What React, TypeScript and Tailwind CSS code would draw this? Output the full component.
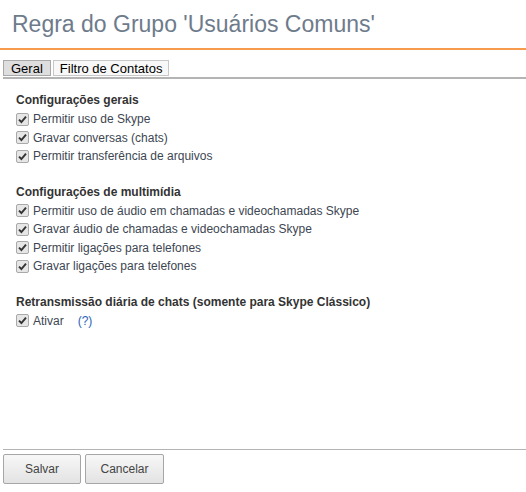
import React from "react";

type Section = { title: string; items: string[]; help?: boolean };

const sections: Section[] = [
  {
    title: "Configurações gerais",
    items: ["Permitir uso de Skype", "Gravar conversas (chats)", "Permitir transferência de arquivos"],
  },
  {
    title: "Configurações de multimídia",
    items: [
      "Permitir uso de áudio em chamadas e videochamadas Skype",
      "Gravar áudio de chamadas e videochamadas Skype",
      "Permitir ligações para telefones",
      "Gravar ligações para telefones",
    ],
  },
  {
    title: "Retransmissão diária de chats (somente para Skype Clássico)",
    items: ["Ativar"],
    help: true,
  },
];

function CheckBox() {
  return (
    <span className="inline-flex items-center justify-center w-[13px] h-[13px] border border-[#a9a9a9] bg-[#e6e6e6] rounded-[2px] shrink-0">
      <svg width="9" height="9" viewBox="0 0 9 9">
        <path d="M1 4.6 L3.4 7 L8 1.6" fill="none" stroke="#333" strokeWidth="1.9" />
      </svg>
    </span>
  );
}

export default function App() {
  return (
    <div className="w-[526px] h-[492px] bg-white flex flex-col font-['Liberation_Sans',Arial,sans-serif]">
      <h1 className="pl-[12px] pt-[10px] h-[48px] text-[23px] leading-[28px] text-[#6e7b8b]">
        Regra do Grupo 'Usuários Comuns'
      </h1>
      <div className="h-[2px] bg-[#f79a4c]" />

      {/* tabs */}
      <div className="mt-[10px] ml-[3px] flex gap-[2px] text-[13px] leading-[14px] text-black">
        <div className="border border-[#a8a8a8] bg-[#dedede] px-[7px] pt-px h-[16px]">Geral</div>
        <div className="border border-[#c8c8c8] bg-[#f8f8f8] px-[6px] pt-px h-[16px]">Filtro de Contatos</div>
      </div>
      <div className="ml-[3px] mt-px h-[2px] bg-[#b4b4b4]" />

      <div className="flex-1 pl-[16px] pt-[13px] flex flex-col gap-[18px]">
        {sections.map((s) => (
          <div key={s.title}>
            <p className="text-[12px] leading-[16px] font-bold text-[#333] mb-[2px]">{s.title}</p>
            {s.items.map((item) => (
              <label key={item} className="flex items-center gap-[4px] h-[18.5px] text-[12px] text-[#3d4652]">
                <CheckBox />
                <span>{item}</span>
                {s.help && <span className="ml-[10px] text-[#2a63b8]">(?)</span>}
              </label>
            ))}
          </div>
        ))}
      </div>

      <div className="ml-[3px] h-px bg-[#b4b4b4]" />
      <div className="flex gap-[4px] ml-[3px] mt-[4px] mb-[8px]">
        <button className="w-[78px] h-[30px] border border-[#a6a6a6] rounded-[2px] bg-gradient-to-b from-[#f7f7f7] to-[#e3e3e3] text-[12px] text-[#444]">
          Salvar
        </button>
        <button className="w-[79px] h-[30px] border border-[#a6a6a6] rounded-[2px] bg-gradient-to-b from-[#f7f7f7] to-[#e3e3e3] text-[12px] text-[#444]">
          Cancelar
        </button>
      </div>
    </div>
  );
}
